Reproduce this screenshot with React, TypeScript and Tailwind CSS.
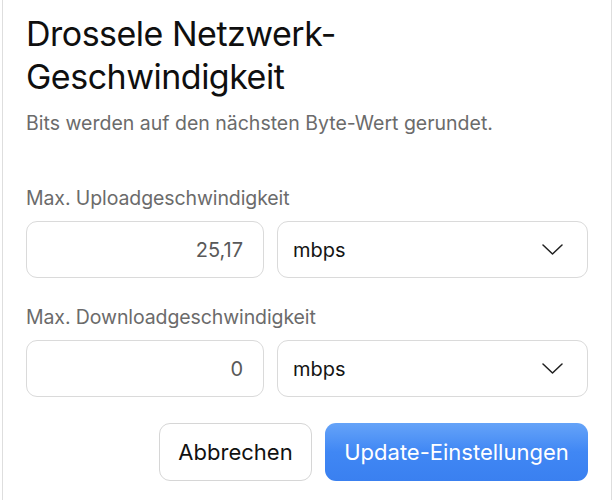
import { useState } from "react";

function Chevron() {
  return (
    <svg width="21" height="11" viewBox="0 0 21 11" fill="none" className="shrink-0">
      <path d="M1 1 L10.5 10 L20 1" stroke="#1f1f1f" strokeWidth="1.5" strokeLinecap="round" strokeLinejoin="round" />
    </svg>
  );
}

function SpeedRow({ label, value }: { label: string; value: string }) {
  const [unit] = useState("mbps");
  return (
    <div className="flex flex-col">
      <label className="text-[19.5px] leading-[24px] text-[#6b6b6b] tracking-[-0.1px]">{label}</label>
      <div className="mt-[11px] flex gap-[13px]">
        <div className="w-[238px] h-[57px] rounded-[11px] border border-[#dadada] flex items-center justify-end pr-[20px] text-[20px] text-[#595959]">
          {value}
        </div>
        <div className="flex-1 h-[57px] rounded-[11px] border border-[#dadada] flex items-center justify-between pl-[15px] pr-[24px] text-[20px] text-[#141414]">
          <span>{unit}</span>
          <Chevron />
        </div>
      </div>
    </div>
  );
}

export default function App() {
  return (
    <div className="min-h-[500px] bg-white font-['Inter',sans-serif]">
      <div className="mx-[2px] min-h-[500px] border-x border-[#dedede] px-[23px] pt-[12px]">
        <h1 className="text-[34px] leading-[43px] text-[#0f0f0f] tracking-[-0.5px]">
          Drossele Netzwerk-
          <br />
          Geschwindigkeit
        </h1>
        <p className="mt-[13px] text-[19.5px] leading-[24px] text-[#6b6b6b]">
          Bits werden auf den nächsten Byte-Wert gerundet.
        </p>

        <div className="mt-[51px]">
          <SpeedRow label="Max. Uploadgeschwindigkeit" value="25,17" />
        </div>
        <div className="mt-[27px]">
          <SpeedRow label="Max. Downloadgeschwindigkeit" value="0" />
        </div>

        <div className="mt-[26px] flex justify-end gap-[13px]">
          <button className="h-[58px] w-[153px] rounded-[11px] border border-[#d6d6d6] bg-white text-[22px] text-[#111]">
            Abbrechen
          </button>
          <button className="h-[58px] w-[263px] rounded-[11px] bg-gradient-to-b from-[#65a3f8] via-[#4087f4] to-[#3a80f0] text-[22px] text-white">
            Update-Einstellungen
          </button>
        </div>
      </div>
    </div>
  );
}
